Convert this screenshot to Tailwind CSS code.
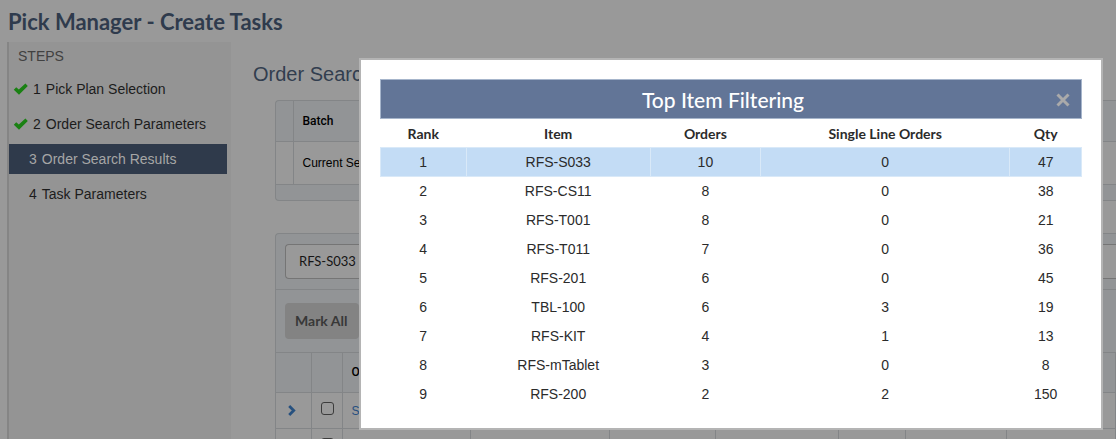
<!DOCTYPE html>
<html lang="en">
<head>
<meta charset="utf-8">
<meta name="viewport" content="width=device-width, initial-scale=1">
<title>Pick Manager - Create Tasks</title>
<script src="https://cdn.jsdelivr.net/npm/@tailwindcss/browser@4"></script>
</head>
<body class="h-screen overflow-hidden bg-[#999999] font-['Liberation_Sans',Arial,sans-serif] text-sm text-[#1c1c1c]">
<div class="flex h-full flex-col overflow-hidden">
  <header class="h-[42px] shrink-0 px-2 pt-[6px]">
    <h1 class="font-['Lato',sans-serif] text-[22px] leading-[32px] font-bold text-[#2f3b4d]">Pick Manager - Create Tasks</h1>
  </header>
  <div class="flex min-h-0 flex-1 pl-[7px]">
    <nav aria-label="Steps" class="w-56 shrink-0 border-l-2 border-[#858585] bg-[#949494] pr-1">
      <h2 class="pt-1 pl-[9px] leading-5 text-[#414141]">STEPS</h2>
      <ol class="mt-2 flex flex-col gap-[5px]">
        <li><a href="#plan" class="flex h-[30px] items-center gap-[5px] pl-1">
          <svg class="h-3 w-[15px]" viewBox="0 0 15 12" aria-hidden="true"><path d="M0.8 6.8 3.2 4.2 5.8 6.5 12.4 0.6 14.8 3 6 11.8z" fill="#1a8113"/></svg>
          <span>1</span><span>Pick Plan Selection</span></a></li>
        <li><a href="#search" class="flex h-[30px] items-center gap-[5px] pl-1">
          <svg class="h-3 w-[15px]" viewBox="0 0 15 12" aria-hidden="true"><path d="M0.8 6.8 3.2 4.2 5.8 6.5 12.4 0.6 14.8 3 6 11.8z" fill="#1a8113"/></svg>
          <span>2</span><span>Order Search Parameters</span></a></li>
        <li><a href="#results" aria-current="step" class="flex h-[30px] items-center gap-[5px] bg-[#2f3a4b] pl-5 text-[#a6a6a6]"><span>3</span><span>Order Search Results</span></a></li>
        <li><a href="#task" class="flex h-[30px] items-center gap-[5px] pl-5"><span>4</span><span>Task Parameters</span></a></li>
      </ol>
    </nav>
    <main class="min-h-0 min-w-0 flex-1 overflow-hidden pt-[18px] pl-[22px]">
      <h2 class="text-xl leading-7 text-[#323e4f]">Order Search Results</h2>
      <div class="mt-3 ml-[22px] overflow-hidden rounded-l border border-r-0 border-[#838587] bg-[#929496] text-xs text-black">
        <table class="w-full table-fixed border-collapse text-left">
          <colgroup><col class="w-[17px]"><col></colgroup>
          <thead><tr class="h-10 border-b border-[#838587]"><td class="border-r border-[#838587]"></td><th class="pl-[9px] font-['Roboto',sans-serif] font-medium">Batch</th></tr></thead>
          <tbody><tr class="h-[43px] border-b border-[#838587] bg-[#999999]"><td class="border-r border-[#838587]"></td><td class="pl-[9px]">Current Search</td></tr></tbody>
        </table>
        <div class="h-[15px]"></div>
      </div>
      <div class="mt-8 ml-[22px] overflow-hidden rounded-tl border border-r-0 border-[#838587] bg-[#929496]">
        <div class="border-b border-[#838587] py-[10px] pl-[9px]">
          <input aria-label="Item" value="RFS-S033" class="block h-[35px] w-full rounded-l border border-r-0 border-[#757575] bg-[#999999] px-[13px] font-['Lato',sans-serif] text-[13px] text-[#151515]">
        </div>
        <div class="border-b border-[#838587] py-[13px] pl-[9px]">
          <button type="button" class="block h-9 rounded bg-[#838383] pr-3 pl-[10px] font-['Lato',sans-serif] text-sm font-bold text-[#383838]">Mark All</button>
        </div>
        <table class="w-full table-fixed border-collapse text-left text-xs text-black [&_td]:border-r [&_td]:border-[#838587] [&_th]:border-r [&_th]:border-[#838587]">
          <colgroup><col class="w-[35px]"><col class="w-[31px]"><col class="w-32"><col class="w-[139px]"><col class="w-[106px]"><col class="w-[123px]"><col class="w-[67px]"><col class="w-[101px]"><col></colgroup>
          <thead><tr class="h-10 border-b border-[#838587]"><td></td><td></td><th class="pl-[9px] font-['Roboto',sans-serif] font-medium">Order</th><td></td><td></td><td></td><td></td><td></td><td></td></tr></thead>
          <tbody class="bg-[#999999]">
            <tr class="h-9 border-b border-[#838587]">
              <td class="pl-3"><button type="button" aria-label="Expand" class="block"><svg class="h-3 w-2" viewBox="0 0 8 12" aria-hidden="true"><path d="M1.2 1 5.7 5.5 1.2 10" fill="none" stroke="#27517f" stroke-width="2.8"/></svg></button></td>
              <td class="pl-[9px]"><input type="checkbox" aria-label="Select order" class="mb-1 block h-[13px] w-[13px] appearance-none rounded-[3px] border border-[#3c3c3c]"></td>
              <td class="pl-[9px]"><a href="#order" class="text-[#264f80]">SO-1001</a></td><td></td><td></td><td></td><td></td><td></td><td></td>
            </tr>
            <tr class="h-9"><td></td><td class="pl-[9px]"><input type="checkbox" aria-label="Select order" class="mb-1 block h-[13px] w-[13px] appearance-none rounded-[3px] border border-[#3c3c3c]"></td><td></td><td></td><td></td><td></td><td></td><td></td><td></td></tr>
          </tbody>
        </table>
      </div>
    </main>
  </div>
</div>

<section role="dialog" aria-modal="true" aria-labelledby="dialog-title" class="absolute top-[58px] right-[13px] left-[359px] border-2 border-[#b4b4b4] bg-white px-[19px] pt-[19px] pb-5">
  <div class="relative flex h-10 items-center justify-center border border-[#a6b5cb] bg-[#627597]">
    <h2 id="dialog-title" class="pt-[2px] pr-4 font-['Lato',sans-serif] text-[21px] leading-7 font-medium text-white">Top Item Filtering</h2>
    <button type="button" aria-label="Close" class="absolute right-[10px]"><svg class="h-4 w-4" viewBox="0 0 16 16" aria-hidden="true"><path d="M2.5 3.5 13.5 14.5M13.5 3.5 2.5 14.5" stroke="#aaaaaa" stroke-width="3" fill="none"/></svg></button>
  </div>
  <table class="w-full table-fixed border-collapse text-center text-[#2b2b2b]">
    <colgroup><col class="w-[12.2%]"><col class="w-[26.3%]"><col class="w-[15.7%]"><col class="w-[35.6%]"><col class="w-[10.2%]"></colgroup>
    <thead class="font-['Lato',sans-serif]"><tr class="h-7 [&_th]:pt-[2px]"><th>Rank</th><th>Item</th><th>Orders</th><th>Single Line Orders</th><th>Qty</th></tr></thead>
    <tbody>
      <tr class="h-[29px] bg-[#c3dcf5] [&_td]:border [&_td]:border-[#d9e9f8]"><td>1</td><td>RFS-S033</td><td>10</td><td>0</td><td>47</td></tr>
      <tr class="h-[29px]"><td>2</td><td>RFS-CS11</td><td>8</td><td>0</td><td>38</td></tr>
      <tr class="h-[29px]"><td>3</td><td>RFS-T001</td><td>8</td><td>0</td><td>21</td></tr>
      <tr class="h-[29px]"><td>4</td><td>RFS-T011</td><td>7</td><td>0</td><td>36</td></tr>
      <tr class="h-[29px]"><td>5</td><td>RFS-201</td><td>6</td><td>0</td><td>45</td></tr>
      <tr class="h-[29px]"><td>6</td><td>TBL-100</td><td>6</td><td>3</td><td>19</td></tr>
      <tr class="h-[29px]"><td>7</td><td>RFS-KIT</td><td>4</td><td>1</td><td>13</td></tr>
      <tr class="h-[29px]"><td>8</td><td>RFS-mTablet</td><td>3</td><td>0</td><td>8</td></tr>
      <tr class="h-[29px]"><td>9</td><td>RFS-200</td><td>2</td><td>2</td><td>150</td></tr>
    </tbody>
  </table>
</section>
</body>
</html>
